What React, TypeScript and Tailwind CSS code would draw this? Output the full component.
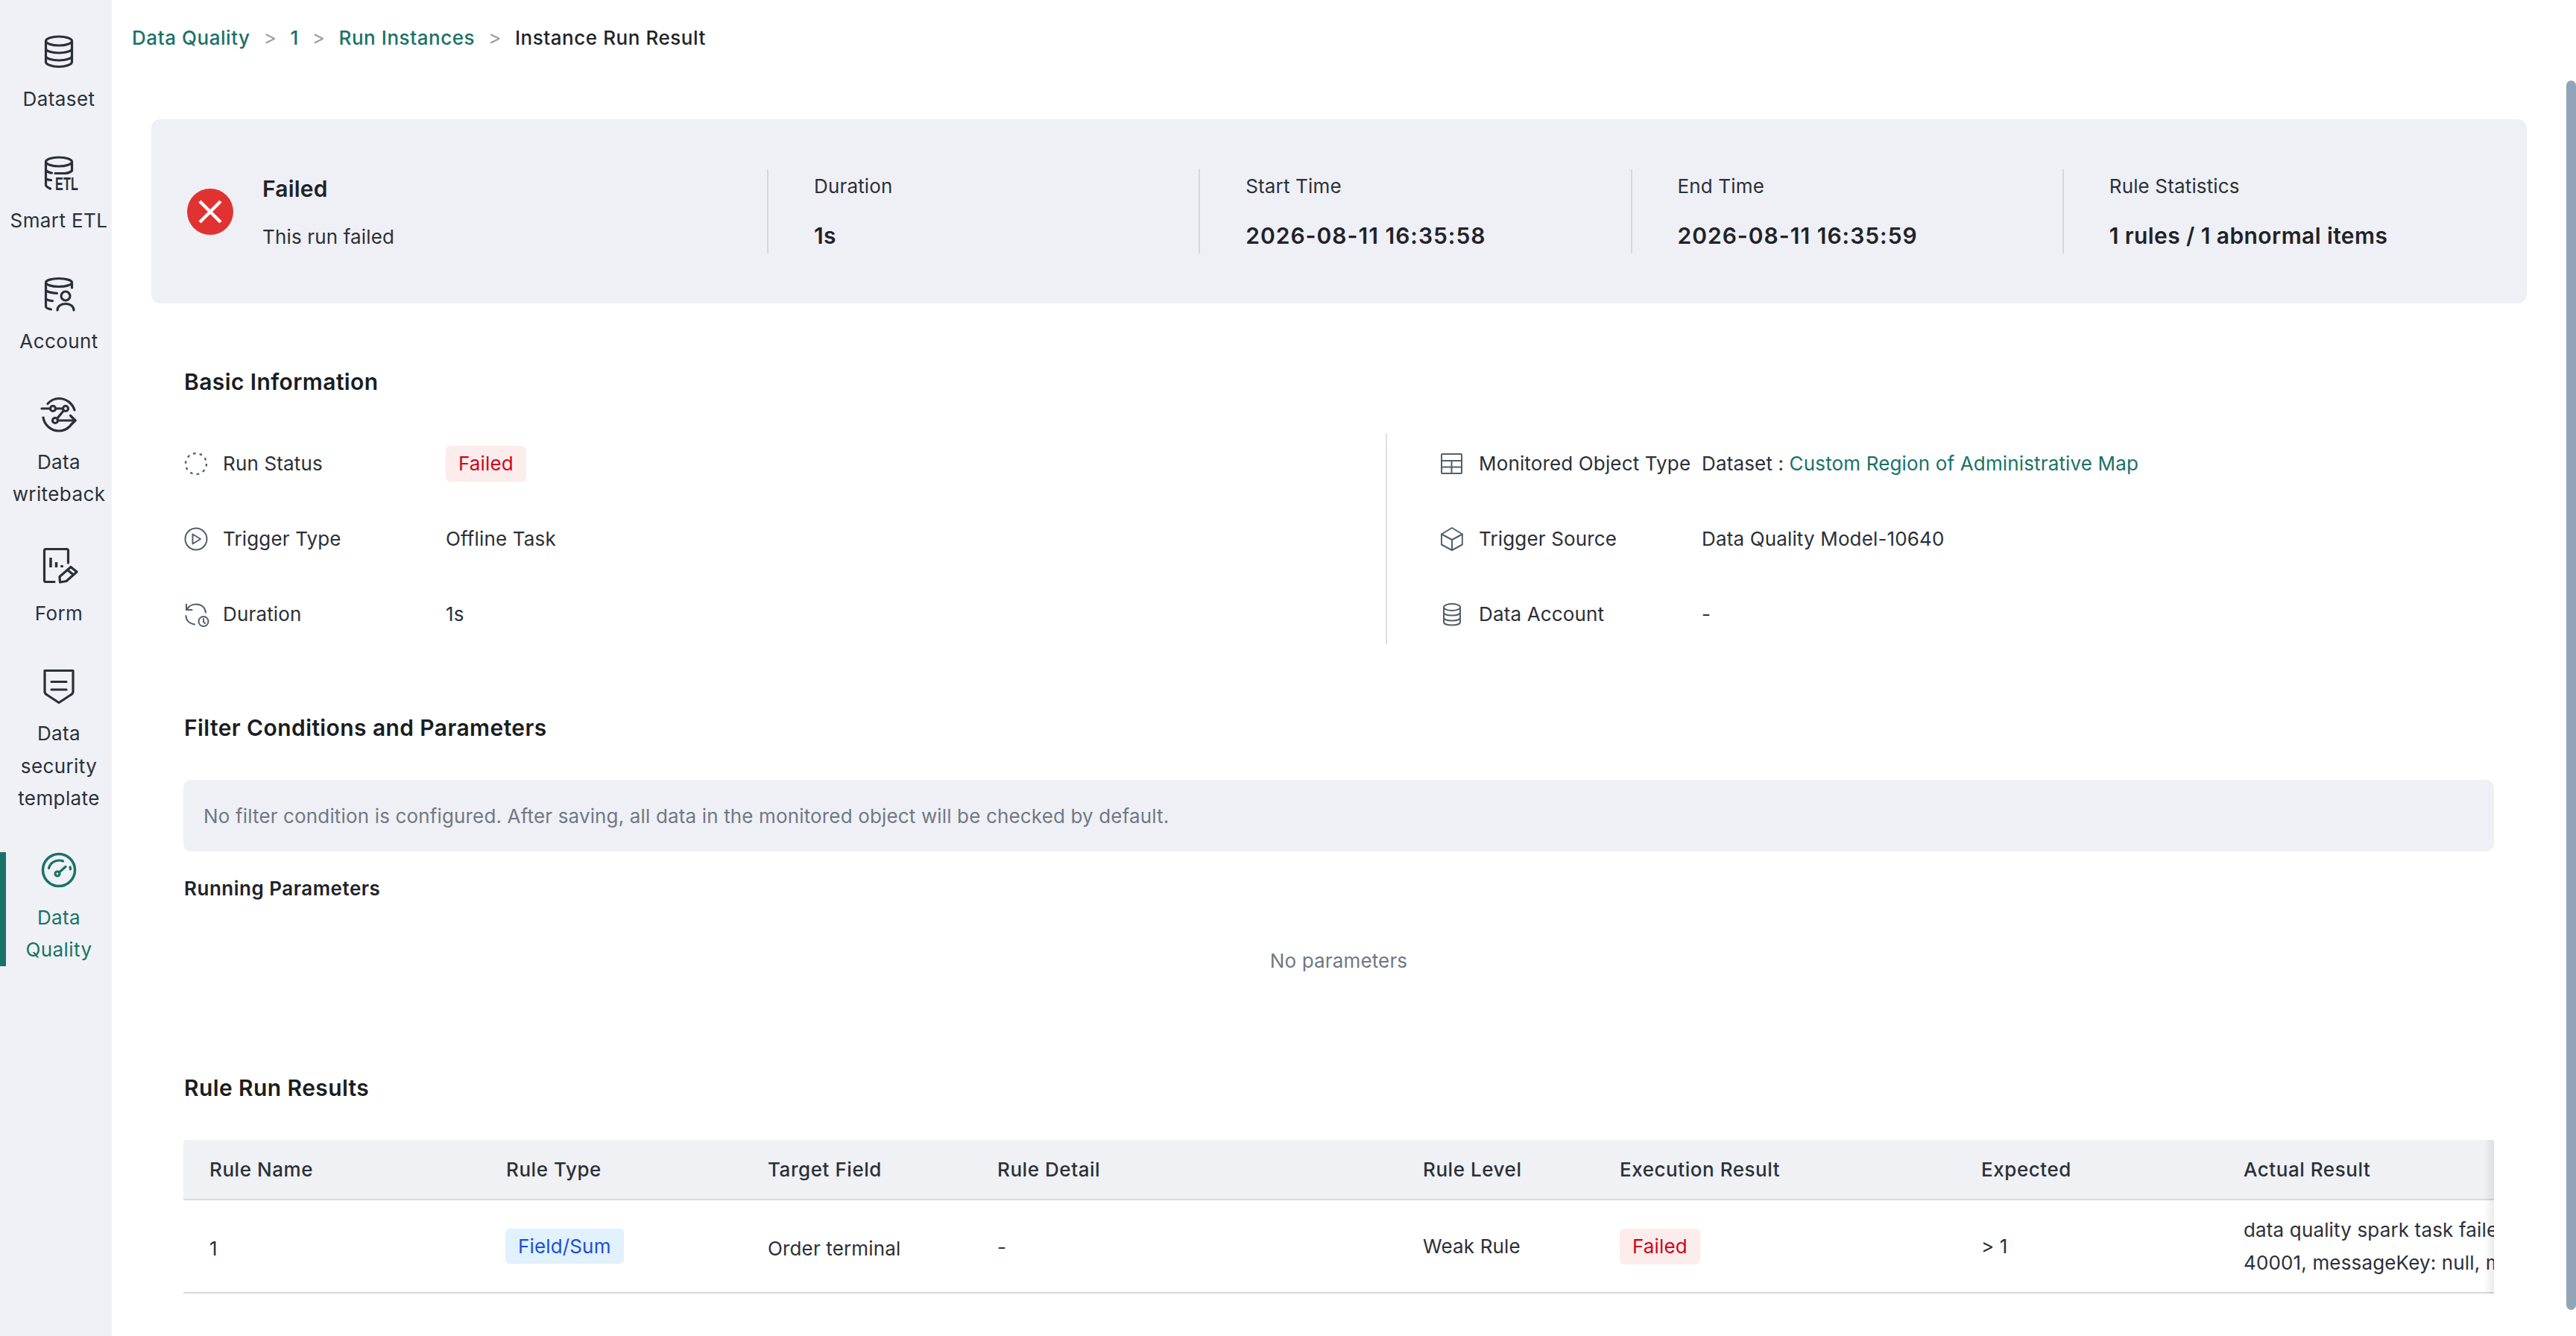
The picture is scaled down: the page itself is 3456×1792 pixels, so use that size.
import React from "react";

const Stroke = ({ children, className = "" }: { children: React.ReactNode; className?: string }) => (
  <svg viewBox="0 0 48 48" width={48} height={48} fill="none" stroke="currentColor" strokeWidth={3.2} strokeLinecap="round" strokeLinejoin="round" className={"overflow-visible " + className}>
    {children}
  </svg>
);

const DatasetIcon = () => (
  <Stroke>
    <ellipse cx="24" cy="9" rx="17.5" ry="6" />
    <path d="M6.5 9v28c0 3.5 8 6.500 17.500 6.500s17.500-3 17.500-6.500V9" />
    <path d="M6.500 19c0 3.500 8 6 17.500 6s17.500-2.500 17.500-6" />
    <path d="M6.500 29c0 3.500 8 6 17.500 6s17.500-2.500 17.500-6" />
  </Stroke>
);
const EtlIcon = () => (
  <Stroke>
    <ellipse cx="24" cy="9" rx="17.500" ry="6" />
    <path d="M41.500 9v12c-2 2-5 3-9 3.500H19" />
    <path d="M6.500 9v31c0 1.500 1.500 3 6 5" />
    <path d="M6.500 20.500c2 2 4 3 8 3.500" />
    <path d="M6.500 32c2 1 4 1.500 7 1.600" />
    <text x="19" y="46.500" fontSize="24" fontWeight="700" stroke="none" fill="currentColor" fontFamily="'Liberation Sans', sans-serif" textLength="31" lengthAdjust="spacingAndGlyphs">ETL</text>
  </Stroke>
);
const AccountIcon = () => (
  <Stroke>
    <ellipse cx="24" cy="8" rx="17.500" ry="5.500" />
    <path d="M41.500 8v7" />
    <path d="M6.500 8v32c0 1.500 2 3 7 4" />
    <path d="M6.500 18.500c3 2.500 8 3.500 15 3.800" />
    <path d="M6.500 30c2 1.500 5 2.300 9 2.600" />
    <circle cx="33" cy="26" r="6" />
    <path d="M22 45c0-5.500 5-8.500 11-8.500S44 39.500 44 45" />
  </Stroke>
);
const WritebackIcon = () => (
  <Stroke>
    <path d="M9 9.500C13 5 18 2.500 24 2.500c10 0 18 6.500 21 15.500" />
    <path d="M3 28c1.500 10 10.500 18 21 18 6 0 11-2.500 15-6.500" />
    <path d="M1 16h11.500" />
    <circle cx="16" cy="16" r="3.500" />
    <path d="M19.500 16h10" />
    <circle cx="33" cy="16" r="3.500" />
    <path d="M30.500 18.500 22 29" />
    <circle cx="19" cy="32" r="3.500" />
    <path d="M22.500 32H46" />
    <path d="m39.500 25.500 6.500 6.500-6.500 6.500" />
  </Stroke>
);
const FormIcon = () => (
  <Stroke>
    <path d="M18 45.500H6.500a2 2 0 0 1-2-2v-40a2 2 0 0 1 2-2h28a2 2 0 0 1 2 2V20" />
    <path d="M13 13v13M20.500 19v7M28 23v3" strokeWidth={3.500} strokeLinecap="butt" />
    <path d="M25 38.500 40 25.500l8 6.500-14 12.500-8.500 1.500z" />
    <path d="m35.500 29.500 8 6.500" />
  </Stroke>
);
const ShieldIcon = () => (
  <Stroke>
    <path d="M5 2.500h38v28c0 2-1 3.500-3 4.500L24 45.500 8 35c-2-1-3-2.500-3-4.500z" />
    <path d="M14 17.500h20M14 28h20" />
  </Stroke>
);
const GaugeIcon = () => (
  <Stroke>
    <circle cx="24" cy="24" r="21.500" strokeWidth={3.500} />
    <path d="M10.500 21.500C12 15 18 11 24.500 11c2 0 3.500.3 5 1" />
    <path d="M39 20c.300 1 .500 2 .500 3" />
    <circle cx="22" cy="29" r="3" />
    <path d="m24.500 27 8.500-7.500" />
  </Stroke>
);

const Small = ({ children }: { children: React.ReactNode }) => (
  <svg viewBox="0 0 30 30" width={30} height={30} fill="none" stroke="#545e6b" strokeWidth={2} strokeLinecap="round" strokeLinejoin="round" className="overflow-visible shrink-0">
    {children}
  </svg>
);
const DashCircle = () => (
  <Small>
    <circle cx="15" cy="15" r="14" strokeWidth={2.300} strokeDasharray="3.500 5.300" strokeLinecap="butt" />
  </Small>
);
const PlayCircle = () => (
  <Small>
    <circle cx="15" cy="15" r="14.500" />
    <path d="M10.500 8.500v13L21 15z" />
  </Small>
);
const HistoryIcon = () => (
  <Small>
    <path d="M2.500 9C5 4 9 1.500 15 1.500c7 0 12 4 13 11" />
    <path d="M2 1.500V9h7.500" />
    <path d="M1.500 17c0 6 4.500 10.500 11.500 11.500" />
    <circle cx="25" cy="24.500" r="6.500" />
    <path d="M25 21v4l2 2" />
  </Small>
);
const TableIcon = () => (
  <Small>
    <rect x="1" y="2" width="27" height="26" rx="1" />
    <path d="M1 11h27M14.500 11v17M1 19.500h27" />
  </Small>
);
const CubeIcon = () => (
  <Small>
    <path d="M14.500 0 29 8.500v14L14.500 30 0 22.500v-14z" transform="translate(1 0) scale(.96 1)" />
    <path d="M1 8.500 15 16l14-7.500M15 16v14" />
  </Small>
);
const DbIcon = () => (
  <Small>
    <ellipse cx="15" cy="5.500" rx="11" ry="4.500" />
    <path d="M4 5.500v20c0 2.500 5 4 11 4s11-1.500 11-4v-20" />
    <path d="M4 12.500c0 2.500 5 4 11 4s11-1.500 11-4" />
    <path d="M4 19.500c0 2.500 5 4 11 4s11-1.500 11-4" />
  </Small>
);

const NavItem = ({ icon, lines, active, extra = "" }: { icon: React.ReactNode; lines: string[]; active?: boolean; extra?: string }) => (
  <div className={"flex flex-col items-center border-l-[8px] " + extra + " " + (active ? "border-[#1a7267] text-[#1a7267]" : "border-transparent text-[#2b3038]")}>
    <div className="h-[49px] flex items-center">{icon}</div>
    <div className="mt-[17px] text-[26px] leading-[43.500px] tracking-[0.4px] text-center">
      {lines.map((l) => (
        <div key={l}>{l}</div>
      ))}
    </div>
  </div>
);

const Stat = ({ label, value, tracking }: { label: string; value: string; tracking: string }) => (
  <div className="w-[579.250px] h-[113px] border-l-2 border-[#d5d8de] pl-[61px] flex flex-col">
    <div className="text-[26px] leading-[44px] text-[#2b3038] mt-[1px]">{label}</div>
    <div className={"text-[30px] leading-[44px] font-semibold text-[#1f2329] mt-[22px] " + tracking}>{value}</div>
  </div>
);

const InfoRow = ({ icon, label, children }: { icon: React.ReactNode; label: string; children: React.ReactNode }) => (
  <div className="h-[81px] flex items-center text-[26px] text-[#2b3038]">
    <div className="w-[51px] shrink-0 flex">{icon}</div>
    <div className="w-[299px] shrink-0 whitespace-nowrap">{label}</div>
    <div className="whitespace-nowrap">{children}</div>
  </div>
);

const FailedTag = () => (
  <span className="inline-flex h-[48px] items-center px-[17px] rounded-[6px] bg-[#fdecec] text-[#d0021b] text-[26px]">Failed</span>
);

const headers: [string, string][] = [
  ["Rule Name", "w-[398px]"],
  ["Rule Type", "w-[351px]"],
  ["Target Field", "w-[308px]"],
  ["Rule Detail", "w-[571px]"],
  ["Rule Level", "w-[264px]"],
  ["Execution Result", "w-[485px]"],
  ["Expected", "w-[352px]"],
  ["Actual Result", "w-[1000px]"],
];

export default function App() {
  return (
    <div className="relative flex h-[1792px] w-full overflow-hidden bg-white font-['Inter',sans-serif] tracking-[0.15px] text-[#2b3038]">
      <aside className="w-[150px] shrink-0 bg-[#eff1f6] pt-[45px] flex flex-col gap-[52px]">
        <NavItem icon={<DatasetIcon />} lines={["Dataset"]} />
        <NavItem icon={<EtlIcon />} lines={["Smart ETL"]} extra="mt-[1px]" />
        <NavItem icon={<AccountIcon />} lines={["Account"]} extra="mt-[1px]" />
        <NavItem icon={<WritebackIcon />} lines={["Data", "writeback"]} />
        <NavItem icon={<FormIcon />} lines={["Form"]} extra="-mt-[2px]" />
        <NavItem icon={<ShieldIcon />} lines={["Data", "security", "template"]} />
        <NavItem icon={<GaugeIcon />} lines={["Data", "Quality"]} active extra="-mt-[2px]" />
      </aside>

      <main className="flex-1 min-w-0 flex flex-col">
        <nav className="h-[100px] pl-[27px] flex items-center text-[26px] font-medium tracking-[0.55px] whitespace-nowrap">
          <span className="text-[#1a7267]">Data Quality</span>
          <span className="text-[#9a9ea5] font-normal mx-[18px]">&gt;</span>
          <span className="text-[#1a7267]">1</span>
          <span className="text-[#9a9ea5] font-normal mx-[18px]">&gt;</span>
          <span className="text-[#1a7267]">Run Instances</span>
          <span className="text-[#9a9ea5] font-normal mx-[18px]">&gt;</span>
          <span className="text-[#1f2329]">Instance Run Result</span>
        </nav>

        <section className="mt-[60px] ml-[53px] w-[3187px] h-[247px] rounded-[12px] bg-[#eff0f5] flex items-center">
          <div className="w-[826px] flex items-center pl-[48px]">
            <svg width={62} height={62} viewBox="0 0 62 62" className="shrink-0">
              <circle cx="31" cy="31" r="31" fill="#e13232" />
              <path d="M17 17l28 28M45 17 17 45" stroke="#fff" strokeWidth={4.500} />
            </svg>
            <div className="ml-[39px] flex flex-col pt-[3px]">
              <div className="text-[30px] leading-[44px] font-semibold tracking-[0.2px] text-[#1f2329]">Failed</div>
              <div className="text-[26px] leading-[44px] mt-[21px]">This run failed</div>
            </div>
          </div>
          <Stat label="Duration" value="1s" tracking="tracking-[0.3px]" />
          <Stat label="Start Time" value="2026-08-11 16:35:58" tracking="tracking-[1px]" />
          <Stat label="End Time" value="2026-08-11 16:35:59" tracking="tracking-[1px]" />
          <Stat label="Rule Statistics" value="1 rules / 1 abnormal items" tracking="tracking-[0.4px]" />
        </section>

        <h2 className="mt-[83px] ml-[97px] text-[30px] leading-[44px] font-semibold tracking-[0.4px] text-[#1a1d21]">Basic Information</h2>

        <section className="mt-[47px] ml-[96px] flex">
          <div className="w-[1613px] pl-[2px] flex flex-col gap-[20px]">
            <InfoRow icon={<DashCircle />} label="Run Status">
              <FailedTag />
            </InfoRow>
            <InfoRow icon={<PlayCircle />} label="Trigger Type">
              Offline Task
            </InfoRow>
            <InfoRow icon={<HistoryIcon />} label="Duration">
              1s
            </InfoRow>
          </div>
          <div className="border-l-2 border-[#dde1e7] pl-[72px] flex flex-col gap-[20px]">
            <InfoRow icon={<TableIcon />} label="Monitored Object Type">
              Dataset : <span className="text-[#1a7267]">Custom Region of Administrative Map</span>
            </InfoRow>
            <InfoRow icon={<CubeIcon />} label="Trigger Source">
              Data Quality Model-10640
            </InfoRow>
            <InfoRow icon={<DbIcon />} label="Data Account">
              -
            </InfoRow>
          </div>
        </section>

        <h2 className="mt-[90px] ml-[97px] text-[30px] leading-[44px] font-semibold tracking-[0.4px] text-[#1a1d21]">Filter Conditions and Parameters</h2>
        <div className="mt-[48px] ml-[96px] w-[3100px] h-[96px] rounded-[10px] bg-[#eff0f5] flex items-center pl-[27px] pt-[1px] text-[26px] text-[#6f7885]">
          No filter condition is configured. After saving, all data in the monitored object will be checked by default.
        </div>
        <div className="mt-[30px] ml-[97px] text-[26px] leading-[40px] font-semibold tracking-[0.5px] text-[#1f2329]">Running Parameters</div>
        <div className="mt-[57px] ml-[96px] w-[3100px] text-center text-[26px] leading-[40px] text-[#6f7885]">No parameters</div>

        <h2 className="mt-[128px] ml-[97px] text-[30px] leading-[44px] font-semibold tracking-[0.4px] text-[#1a1d21]">Rule Run Results</h2>

        <div className="relative mt-[48px] ml-[96px] w-[3100px] overflow-hidden">
          <div className="flex h-[81px] bg-[#eff1f5] border-b-2 border-[#d5d9df] rounded-t-[4px] items-center text-[26px] font-medium tracking-[0.55px] text-[#2b3038] whitespace-nowrap">
            {headers.map(([h, w]) => (
              <div key={h} className={w + " shrink-0 pl-[35px]"}>
                {h}
              </div>
            ))}
          </div>
          <div className="flex h-[125px] border-b-2 border-[#d5d9df] items-center text-[26px] text-[#2b3038] whitespace-nowrap">
            <div className="w-[398px] shrink-0 pl-[35px] pt-[6px]">1</div>
            <div className="w-[351px] shrink-0 pl-[34px]">
              <span className="inline-flex h-[47px] items-center px-[17px] rounded-[6px] bg-[#e1f1fe] text-[#1a4fd8]">Field/Sum</span>
            </div>
            <div className="w-[308px] shrink-0 pl-[35px] pt-[6px]">Order terminal</div>
            <div className="w-[571px] shrink-0 pl-[35px] pt-[2px]">-</div>
            <div className="w-[264px] shrink-0 pl-[35px]">Weak Rule</div>
            <div className="w-[485px] shrink-0 pl-[35px]">
              <FailedTag />
            </div>
            <div className="w-[352px] shrink-0 pl-[35px]">&gt; 1</div>
            <div className="w-[1000px] shrink-0 pl-[35px] leading-[44px]">
              <div>data quality spark task failed: error code</div>
              <div>40001, messageKey: null, message: failed</div>
            </div>
          </div>
          <div className="absolute right-0 top-0 bottom-0 w-[14px] bg-gradient-to-r from-transparent to-[#00000014]" />
        </div>
      </main>

      <div className="absolute right-0 top-[108px] h-[1649px] w-[13px] rounded-full bg-[#93a4b8]" />
    </div>
  );
}
